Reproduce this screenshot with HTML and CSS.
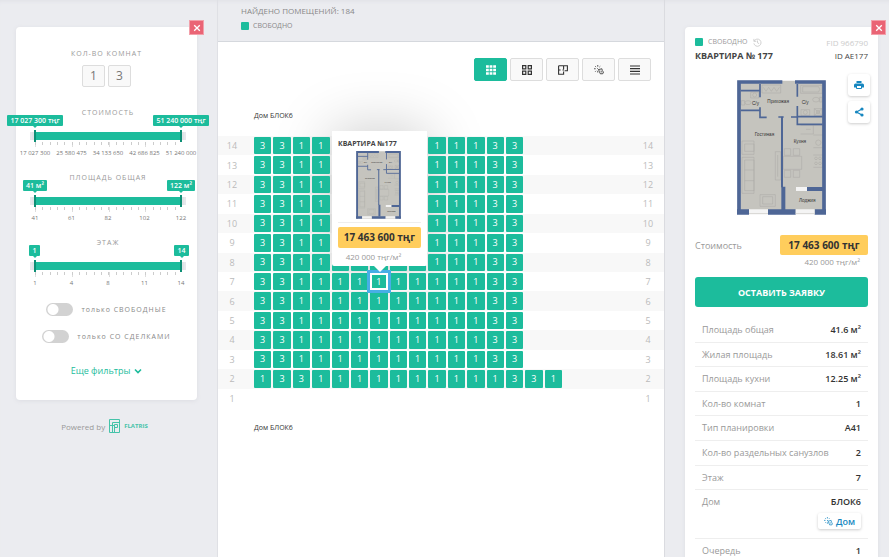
FILE: index.html
```html
<!DOCTYPE html>
<html lang="ru">
<head>
<meta charset="utf-8">
<meta name="viewport" content="width=device-width, initial-scale=1">
<title>Шахматка</title>
<link rel="stylesheet" href="styles.css">
</head>
<body>
<svg class="sprite" aria-hidden="true">
  <symbol id="plan" viewBox="39 30 267 405">
    <path fill="#c5c4be" d="M41 32H304V432H41Z"/>
    <g fill="none" stroke="#aaa9a4" stroke-width="1.5">
      <path d="M114 45h56v24h-56zM118 52l8 12 8-12 8 12 8-12 8 12 8-12M230 46h64v24h-64zM236 50h48q6 8 0 16h-48zM54 213h36v40H54zM62 222h28v22H62zM54 262h36v108H54zM62 270h28v92H62zM62 300h28M62 332h28M108 374h46v35h-46zM116 380h30v22h-30zM154 245h16v85h-16zM161 255v65M178 259h55v39h-55zM181 236h19v20h-19zM208 236h19v20h-19zM181 301h19v21h-19zM208 301h19v21h-19zM268 166h28v126h-28M268 195h28M268 233h28M268 255h28M230 166h38v26h-38M246 178h14M271 116h23v20h-23zM271 116l23 20M294 116l-23 20M231 119h26v17h-26zM80 67h24v17h-24zM52 92h10v13H52z"/>
      <circle cx="283" cy="218" r="8"/><circle cx="276" cy="265" r="4"/><circle cx="288" cy="265" r="4"/><circle cx="276" cy="280" r="4"/><circle cx="288" cy="280" r="4"/>
      <ellipse cx="72" cy="98" rx="9" ry="6"/><ellipse cx="276" cy="89" rx="10" ry="7"/><path d="M287 82h7v14h-7z"/><circle cx="244" cy="127" r="6"/><circle cx="92" cy="75" r="6"/><circle cx="282" cy="126" r="5"/>
    </g>
    <g fill="none" stroke="#4e6696">
      <path stroke-width="11" d="M175 36H45V432M213 36H300V432"/>
      <path stroke-width="16" d="M39 426H75M132 426H215M272 426H306"/>
      <path stroke-width="12" d="M178 350V420M249 357H297"/>
      <path stroke-width="6" d="M174 140V352"/>
      <path stroke-width="5" d="M50 62H108M50 121H108M108 42V82M108 112V142H128M163 141H179M201 141H218M220 42V80M220 108V163H296M220 140H296"/>
    </g>
    <path fill="#f4f4f4" d="M75 418h57v14H75zM215 418h57v14h-57zM216 351h33v12h-33z"/>
    <path fill="none" stroke="#c5c4be" stroke-width="2" d="M75 431h57M215 431h57"/>
    <g class="plan-text">
      <text x="84" y="104">С/у</text><text x="130" y="99">Прихожая</text><text x="233" y="101">С/у</text>
      <text x="92" y="197">Гостиная</text><text x="209" y="219">Кухня</text><text x="225" y="395">Лоджия</text>
    </g>
  </symbol>
  <symbol id="sun" viewBox="0 0 12 12">
    <path fill="none" stroke="currentColor" stroke-width="1" d="M4.500 0v2M1.500 1.500l1 1M0 4.500h2M1.500 8l1-1M4.500 7v2M7.500 1.500l-1 1M4 4l1.500 1.500M5.500 5.500l4-1 .5 2.500 1.500 1.500-1 2H7.500l-1-2.500zM8 7l1.500 2"/>
  </symbol>
  <symbol id="cross" viewBox="0 0 8 8"><path fill="none" stroke="currentColor" stroke-width="1.300" d="M1.200 1.200l5.600 5.600M6.800 1.200L1.200 6.800"/></symbol>
</svg>

<div class="layout">
  <aside class="side">
    <form class="card filters">
      <button class="close" type="button" aria-label="Закрыть фильтры"><svg><use href="#cross"/></svg></button>
      <h2 class="caption">КОЛ-ВО КОМНАТ</h2>
      <div class="rooms"><button type="button">1</button><button type="button">3</button></div>

      <fieldset class="slider">
        <legend class="caption">СТОИМОСТЬ</legend>
        <div class="bubbles"><output>17 027 300 тңг</output><output>51 240 000 тңг</output></div>
        <div class="track"><input type="range" min="0" max="100" value="0" aria-label="Стоимость от"><input type="range" min="0" max="100" value="100" aria-label="Стоимость до"></div>
        <div class="ticks"></div>
        <div class="scale"><span>17 027 300</span><span>25 580 475</span><span>34 133 650</span><span>42 686 825</span><span>51 240 000</span></div>
      </fieldset>
      <fieldset class="slider">
        <legend class="caption">ПЛОЩАДЬ ОБЩАЯ</legend>
        <div class="bubbles"><output>41 м²</output><output>122 м²</output></div>
        <div class="track"><input type="range" min="0" max="100" value="0" aria-label="Площадь от"><input type="range" min="0" max="100" value="100" aria-label="Площадь до"></div>
        <div class="ticks"></div>
        <div class="scale"><span>41</span><span>61</span><span>82</span><span>102</span><span>122</span></div>
      </fieldset>
      <fieldset class="slider">
        <legend class="caption">ЭТАЖ</legend>
        <div class="bubbles"><output>1</output><output>14</output></div>
        <div class="track"><input type="range" min="0" max="100" value="0" aria-label="Этаж от"><input type="range" min="0" max="100" value="100" aria-label="Этаж до"></div>
        <div class="ticks"></div>
        <div class="scale"><span>1</span><span>4</span><span>8</span><span>11</span><span>14</span></div>
      </fieldset>

      <div class="switches">
        <label><input type="checkbox"><span>только СВОБОДНЫЕ</span></label>
        <label><input type="checkbox"><span>только СО СДЕЛКАМИ</span></label>
      </div>
      <a class="more" href="#">Еще фильтры <svg viewBox="0 0 8 6"><path fill="none" stroke="currentColor" stroke-width="1.600" d="M1 1.500l3 3 3-3"/></svg></a>
    </form>
    <p class="powered">Powered by
      <a href="#"><svg viewBox="0 0 11 14"><path fill="none" stroke="currentColor" stroke-width="1" d="M.5.500h10v13H.5zM3.500 13.500V3.500h7M.5 6.500h5M5.500 13.500v-8h3v3h-3"/></svg>FLATRIS</a>
    </p>
  </aside>

  <main class="board">
    <header class="summary">
      <h1>НАЙДЕНО ПОМЕЩЕНИЙ: 184</h1>
      <p class="status">СВОБОДНО</p>
    </header>
    <nav class="views" aria-label="Вид">
      <button class="active" aria-label="Шахматка"><svg viewBox="0 0 10 10"><path fill="none" stroke="currentColor" stroke-width="2.600" stroke-dasharray="2.800 .8" d="M0 1.500h10M0 5h10M0 8.500h10"/></svg></button>
      <button aria-label="Плитка"><svg viewBox="0 0 10 10"><path fill="none" stroke="currentColor" stroke-width="1.200" d="M.6 .6h3.200v3.200H.6zM6.200 .6h3.200v3.200H6.200zM.6 6.200h3.200v3.200H.6zM6.200 6.200h3.200v3.200H6.200z"/></svg></button>
      <button aria-label="Планировки"><svg viewBox="0 0 10 10"><path fill="none" stroke="currentColor" stroke-width="1.100" d="M.6.800h8.800v5H6.600M.6.800v8.400h5V6.500M5.600.800v3.500M.6 5h2M4.500 5h1.500"/></svg></button>
      <button aria-label="Генплан"><svg><use href="#sun"/></svg></button>
      <button aria-label="Список"><svg viewBox="0 0 10 10"><path fill="none" stroke="currentColor" stroke-width="1.200" d="M0 1h10M0 3.700h10M0 6.300h10M0 9h10"/></svg></button>
    </nav>
    <h2 class="house">Дом БЛОК6</h2>
    <div class="floors" id="floors"></div>
    <h2 class="house next">Дом БЛОК6</h2>
  </main>

  <aside class="side details">
    <article class="card flat">
      <button class="close" type="button" aria-label="Закрыть"><svg><use href="#cross"/></svg></button>
      <div class="line meta"><p class="status">СВОБОДНО <svg viewBox="0 0 10 10"><path fill="none" stroke="#ccc" stroke-width="1" d="M1.300 3.500A4 4 0 1 1 1 6M1 1v2.700h2.700M5 2.800V5.300l1.800 1"/></svg></p><span class="fid">FID 966790</span></div>
      <div class="line name"><h2>КВАРТИРА № 177</h2><span>ID AE177</span></div>
      <div class="picture">
        <svg class="plan" role="img" aria-label="Планировка"><use href="#plan"/></svg>
        <div class="tools">
          <button aria-label="Печать"><svg viewBox="0 0 10 10"><path fill="currentColor" d="M2.500 1h5v2h-5zM1.500 3.500h7Q10 3.500 10 5v2.500H8V6H2v1.500H0V5q0-1.500 1.500-1.500z"/><path fill="none" stroke="currentColor" d="M2.500 6v2.500h5V6"/></svg></button>
          <button aria-label="Поделиться"><svg viewBox="0 0 10 10"><path fill="none" stroke="currentColor" stroke-width="1.200" d="M8 2L2.500 5 8 8"/><g fill="currentColor"><circle cx="8" cy="2" r="1.600"/><circle cx="2.500" cy="5" r="1.600"/><circle cx="8" cy="8" r="1.600"/></g></svg></button>
        </div>
      </div>
      <div class="line cost"><span>Стоимость</span><strong class="price">17 463 600 тңг</strong></div>
      <p class="per">420 000 тңг/м²</p>
      <button class="order">ОСТАВИТЬ ЗАЯВКУ</button>
      <dl class="params">
        <div><dt>Площадь общая</dt><dd>41.6 м²</dd></div>
        <div><dt>Жилая площадь</dt><dd>18.61 м²</dd></div>
        <div><dt>Площадь кухни</dt><dd>12.25 м²</dd></div>
        <div><dt>Кол-во комнат</dt><dd>1</dd></div>
        <div><dt>Тип планировки</dt><dd>A41</dd></div>
        <div><dt>Кол-во раздельных санузлов</dt><dd>2</dd></div>
        <div><dt>Этаж</dt><dd>7</dd></div>
        <div class="tall"><dt>Дом</dt><dd>БЛОК6<a href="#"><svg><use href="#sun"/></svg>Дом</a></dd></div>
        <div><dt>Очередь</dt><dd>1</dd></div>
      </dl>
    </article>
  </aside>
</div>

<template id="tip">
  <div class="tip">
    <div class="tip-body">
      <h3>КВАРТИРА №177</h3>
      <svg class="plan"><use href="#plan"/></svg>
      <strong class="price">17 463 600 тңг</strong>
      <p class="per">420 000 тңг/м²</p>
    </div>
  </div>
</template>
<script src="board.js"></script>
</body>
</html>
```
FILE: styles.css
```css
* { box-sizing: border-box; margin: 0; padding: 0; }
body { font-family: "Open Sans", "Noto Sans", sans-serif; font-size: 9px; color: #444; background: #ebecf0; overflow: hidden; }
button, input { font: inherit; color: inherit; }
button { cursor: pointer; }
a { text-decoration: none; }
svg { display: block; }
.sprite { position: absolute; width: 0; height: 0; }
.plan-text { font: 14px "Liberation Sans", sans-serif; fill: #333; }

.layout { display: grid; grid-template-columns: 217px 1fr 225px; height: 100vh; }
.side { padding: 27px 20px 0 16px; box-shadow: inset 0 4px 4px -3px #dfe0e5; }
.details { padding: 27px 11px 0 20px; border-left: 1px solid #dadbe0; }
.card { position: relative; background: #fff; border-radius: 4px; box-shadow: 0 1px 4px #dcdde3; }
.close { position: absolute; top: -7px; right: -7px; width: 15px; height: 15px; display: grid; place-items: center; border: 1px solid #f2a0aa; background: #ea6475; color: #fff; }
.details .close { right: -8px; }
.close svg { width: 8px; height: 8px; }

/* Filters */
.filters { height: 373px; padding-top: 20px; text-align: center; }
.caption { display: block; width: 100%; font-size: 7px; font-weight: 400; line-height: 14px; letter-spacing: 1px; color: #999; text-align: center; }
.rooms { display: flex; justify-content: center; gap: 3px; margin: 4px 0 18px; }
.rooms button { width: 23px; height: 22px; border: 1px solid #ddd; border-radius: 2px; background: #f9f9f9; font-size: 12px; line-height: 20px; color: #777; }

.slider { border: 0; height: 65px; padding: 0 16px 0 19px; }
.slider .caption { line-height: 15px; }
.bubbles { display: flex; justify-content: space-between; height: 11px; margin-top: -5px; }
.bubbles output { position: relative; flex: none; width: 56px; margin: 0 -28px; border-radius: 1px; background: #1cbc9c; font-size: 7px; font-weight: 600; line-height: 11px; text-align: center; white-space: nowrap; color: #fff; }
.slider:nth-of-type(2) output { width: 24px; margin: 0 -12px; }
.slider:nth-of-type(2) output + output { width: 28px; margin: 0 -14px; }
.slider:nth-of-type(3) output { width: 11px; margin: 0 -6px; }
.slider:nth-of-type(3) output + output { width: 15px; margin: 0 -8px; }
.bubbles output::after { content: ""; position: absolute; top: 11px; left: calc(50% - 2px); border: 2px solid transparent; border-top-color: #1cbc9c; }
.track { position: relative; height: 8px; margin-top: 6px; background: #1cbc9c; box-shadow: -3px 0 #dfe3e6, 3px 0 #dfe3e6, -5px 0 #e6e8ec, 5px 0 #e6e8ec; }
.track input { position: absolute; top: -2px; left: -1px; width: calc(100% + 2px); height: 12px; appearance: none; background: none; pointer-events: none; }
.track input::-webkit-slider-thumb { appearance: none; width: 2px; height: 12px; background: #0d8f75; pointer-events: auto; }
.ticks { height: 5px; margin: 2px -1px 2px 0; background: repeating-linear-gradient(90deg, #ccc 0 1px, transparent 1px 5%) 0 0 / 100% 3px no-repeat, repeating-linear-gradient(90deg, #ddd 0 1px, transparent 1px 25%); }
.scale { display: flex; justify-content: space-between; }
.scale span { width: 0; display: flex; justify-content: center; white-space: nowrap; font-size: 6px; line-height: 8px; color: #777; }

.switches { display: grid; gap: 13px; margin-top: 2px; }
.switches label { display: flex; justify-content: center; align-items: center; gap: 8px; height: 14px; font-size: 7px; letter-spacing: 1px; color: #888; }
.switches input { appearance: none; width: 27px; height: 13px; border-radius: 7px; background: radial-gradient(circle at 7px 50%, #fff 0 5px, transparent 6px) #d2d2d2; }
.more { display: flex; justify-content: center; align-items: center; gap: 4px; margin-top: 21px; font-size: 9px; line-height: 14px; color: #1cbc9c; }
.more svg { width: 8px; height: 6px; }
.powered { display: flex; justify-content: center; align-items: center; gap: 4px; margin: 19px 4px 0 0; font-size: 8px; color: #999; }
.powered a { display: flex; align-items: center; gap: 4px; font-size: 6px; font-weight: 700; color: #45c3a9; }
.powered svg { width: 11px; height: 14px; }

/* Board */
.board { background: #fff; border-left: 1px solid #dfe0e5; min-width: 0; }
.summary { height: 42px; padding: 5px 23px; background: #ebecf0; border-bottom: 1px solid #d5d8dd; box-shadow: inset 0 4px 4px -3px #dfe0e5; }
.summary h1 { font-size: 8px; font-weight: 400; line-height: 12px; color: #888; }
.status { display: flex; align-items: center; gap: 4px; font-size: 7px; line-height: 12px; color: #888; }
.summary .status { margin-top: 3px; }
.status::before { content: ""; width: 8px; height: 8px; border-radius: 1px; background: #1cbc9c; }
.views { display: flex; justify-content: flex-end; gap: 3px; padding: 16px 13px 0; }
.views button { width: 33px; height: 23px; display: grid; place-items: center; border: 1px solid #ddd; border-radius: 2px; background: #f9f9f9; color: #333; }
.views .active { background: #1cbc9c; border-color: #1cbc9c; color: #fff; }
.views svg { width: 10px; height: 10px; }
.house { margin: 29px 36px 0; font-size: 7px; font-weight: 400; line-height: 12px; color: #333; }
.house.next { margin-top: 14px; }

.floors { display: grid; grid-template-rows: repeat(14, 1fr); height: 272px; margin-top: 14px; }
.floor { display: grid; grid-template-columns: 36px 308px 1fr 30px; align-items: center; }
.floor:nth-child(odd) { background: #f8f8f8; }
.floor > span { width: 28px; text-align: center; color: #bbb; }
.floor > span:last-child { grid-column: 4; }
.flats { grid-column: 2; display: grid; grid-template-columns: repeat(16, 1fr); gap: 2px; height: 100%; padding: 1px 0; }
.flats > div { position: relative; z-index: 1; display: grid; }
.flats > .selected { z-index: auto; }
.flats button { border: 0; border-radius: 1px; background: #1cbc9c; color: #fff; font-size: 9px; line-height: 12px; }
.flats .selected > button { position: relative; z-index: 2; border: 2px solid #fff; border-radius: 0; outline: 3px solid #48aee6; }

/* The shadow lies under the cells, the body over them */
.tip { position: absolute; bottom: calc(100% + 7px); left: calc(50% - 47px); width: 95px; height: 135px; }
.tip::before { content: ""; position: absolute; inset: 0; box-shadow: 0 0 60px rgba(0, 0, 0, .22); }
.tip-body { position: relative; z-index: 3; height: 100%; padding: 6px; border-radius: 2px; background: #fff; }
.tip-body::after { content: ""; position: absolute; top: 100%; left: 42px; border: 6px solid transparent; border-top-color: #fff; border-bottom: 0; }
.tip h3 { font-size: 7px; line-height: 14px; white-space: nowrap; }
.tip .plan { width: 45px; height: 68px; margin: 0 0 0 18px; }
.tip .price { position: relative; display: block; margin-top: 8px; }
.tip .price::before { content: ""; position: absolute; top: -5px; left: 0; right: 0; height: 1px; background: #eee; }
.tip .per { margin-top: 3px; padding-right: 12px; text-align: center; }
.price { height: 21px; border-radius: 2px; background: #ffcd5c; font-size: 10px; line-height: 21px; text-align: center; color: #333; white-space: nowrap; }
.per { font-size: 8px; line-height: 12px; color: #999; }

/* Flat details */
.flat { height: 100%; min-height: 530px; padding: 9px 10px; }
.line { display: flex; justify-content: space-between; align-items: center; }
.meta { height: 12px; }
.meta .status { color: #999; gap: 5px; }
.meta svg { width: 9px; height: 9px; }
.line .fid, .name span { font-size: 8px; }
.fid { color: #ccc; }
.name { height: 15px; }
.name h2 { font-size: 9px; }
.picture { position: relative; margin-top: 17px; }
.picture .plan { width: 89px; height: 135px; margin: 0 auto; }
.tools { position: absolute; top: -6px; right: -2px; display: grid; gap: 5px; }
.tools button { width: 22px; height: 22px; display: grid; place-items: center; border: 0; border-radius: 3px; background: #fff; box-shadow: 0 1px 3px #ccc; color: #1787c0; }
.tools svg { width: 10px; height: 10px; }
.cost { margin-top: 20px; color: #999; }
.cost .price { width: 88px; height: 20px; line-height: 20px; }
.flat .per { padding-right: 8px; margin-top: 1px; text-align: right; }
.order { display: block; width: 100%; height: 30px; margin: 9px 0 11px; border: 0; border-radius: 3px; background: #1cbc9c; color: #fff; font-size: 9px; font-weight: 700; }
.params { display: grid; grid-template-rows: repeat(10, 1fr); height: 246px; }
.params > div { display: flex; justify-content: space-between; padding: 0 7px; line-height: 23px; border-bottom: 1px solid #eee; }
.params .tall { grid-row: span 2; }
.params dt { color: #999; }
.params dd { font-weight: 600; text-align: right; color: #333; }
.params a { display: flex; align-items: center; gap: 3px; height: 16px; padding: 0 6px; border-radius: 2px; box-shadow: 0 1px 3px #ccc; color: #1787c0; }
.params a svg { width: 9px; height: 9px; }
```
FILE: board.js
```js
const typical = [3, 3, 1, 1, 1, 1, 1, 1, 1, 1, 1, 1, 3, 3];
const second = [1, 3, 3, 1, 1, 1, 1, 1, 1, 1, 1, 1, 1, 3, 3, 1];
const floors = document.getElementById("floors");

function label(floor) {
  const span = document.createElement("span");
  span.textContent = floor;
  return span;
}

for (let floor = 14; floor >= 1; floor--) {
  const row = document.createElement("div");
  row.className = "floor";
  const flats = document.createElement("div");
  flats.className = "flats";
  const rooms = floor === 1 ? [] : floor === 2 ? second : typical;
  rooms.forEach((count, index) => {
    const cell = document.createElement("div");
    const button = document.createElement("button");
    button.textContent = count;
    cell.append(button);
    if (floor === 7 && index === 6) {
      cell.className = "selected";
      cell.append(document.getElementById("tip").content.cloneNode(true));
    }
    flats.append(cell);
  });
  row.append(label(floor), flats, label(floor));
  floors.append(row);
}
```
